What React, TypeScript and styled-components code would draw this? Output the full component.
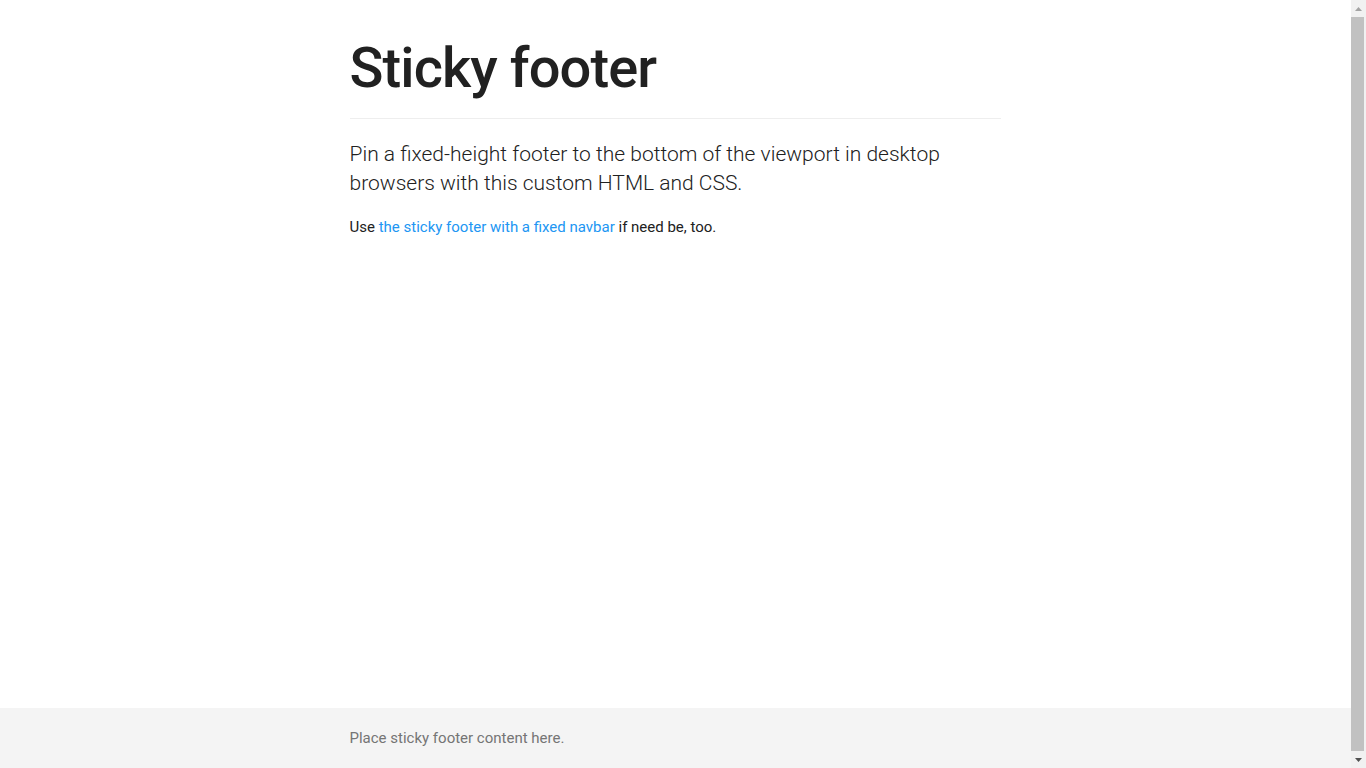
import React from "react";
import styled, { createGlobalStyle } from "styled-components";

const Global = createGlobalStyle`
  body {
    margin: 0;
    font-family: Roboto, "Liberation Sans", Arial, sans-serif;
    font-size: 15px;
    line-height: 1.42857;
    color: #212121;
    background: #fff;
  }
  * { box-sizing: border-box; }
`;

const Shell = styled.div`
  display: flex;
  min-height: 100vh;
`;

const Page = styled.div`
  flex: 1;
  min-width: 0;
  display: flex;
  flex-direction: column;
`;

const Main = styled.main`
  flex: 1;
`;

const Container = styled.div`
  width: 100%;
  max-width: 680px;
  margin: 0 auto;
  padding: 0 15px 0 14px;
`;

const Header = styled.div`
  padding-top: 38px;
  padding-bottom: 18px;
  margin-bottom: 21px;
  border-bottom: 1px solid #eee;
`;

const Title = styled.h1`
  margin: 0;
  font-size: 56px;
  font-weight: 500;
  line-height: 1.1;
  letter-spacing: -0.9px;
  color: #212121;
`;

const Lead = styled.p`
  margin: 0 0 19px;
  font-size: 21px;
  font-weight: 300;
  line-height: 1.4;
  color: #212121;
`;

const Text = styled.p`
  margin: 0;
  font-size: 15px;
  color: #212121;
`;

const Link = styled.a`
  color: #2196f3;
  text-decoration: none;
`;

const Footer = styled.footer`
  height: 60px;
  padding-top: 1px;
  background: #f4f4f4;
  display: flex;
  align-items: center;
`;

const FooterText = styled.p`
  margin: 0;
  font-size: 15px;
  color: #757575;
`;

const Scrollbar = styled.aside`
  position: sticky;
  top: 0;
  width: 15px;
  height: 100vh;
  flex: none;
  background: #f1f1f1;
  display: flex;
  flex-direction: column;
`;

const ArrowButton = styled.div`
  height: 17px;
  display: flex;
  align-items: center;
  justify-content: center;
  flex: none;
`;

const Thumb = styled.div`
  flex: 1;
  margin: 0 2px 0 0;
  width: 13px;
  background: #c1c1c1;
`;

export default function App() {
  return (
    <>
      <Global />
      <Shell>
        <Page>
          <Main>
            <Container>
              <Header>
                <Title>Sticky footer</Title>
              </Header>
              <Lead>
                Pin a fixed-height footer to the bottom of the viewport in desktop
                browsers with this custom HTML and CSS.
              </Lead>
              <Text>
                Use <Link href="#">the sticky footer with a fixed navbar</Link> if
                need be, too.
              </Text>
            </Container>
          </Main>
          <Footer>
            <Container>
              <FooterText>Place sticky footer content here.</FooterText>
            </Container>
          </Footer>
        </Page>
        <Scrollbar>
          <ArrowButton>
            <svg width="7" height="4" viewBox="0 0 7 4">
              <polygon points="3.5,0 7,4 0,4" fill="#a3a3a3" />
            </svg>
          </ArrowButton>
          <Thumb />
          <ArrowButton>
            <svg width="7" height="4" viewBox="0 0 7 4">
              <polygon points="0,0 7,0 3.5,4" fill="#505050" />
            </svg>
          </ArrowButton>
        </Scrollbar>
      </Shell>
    </>
  );
}
